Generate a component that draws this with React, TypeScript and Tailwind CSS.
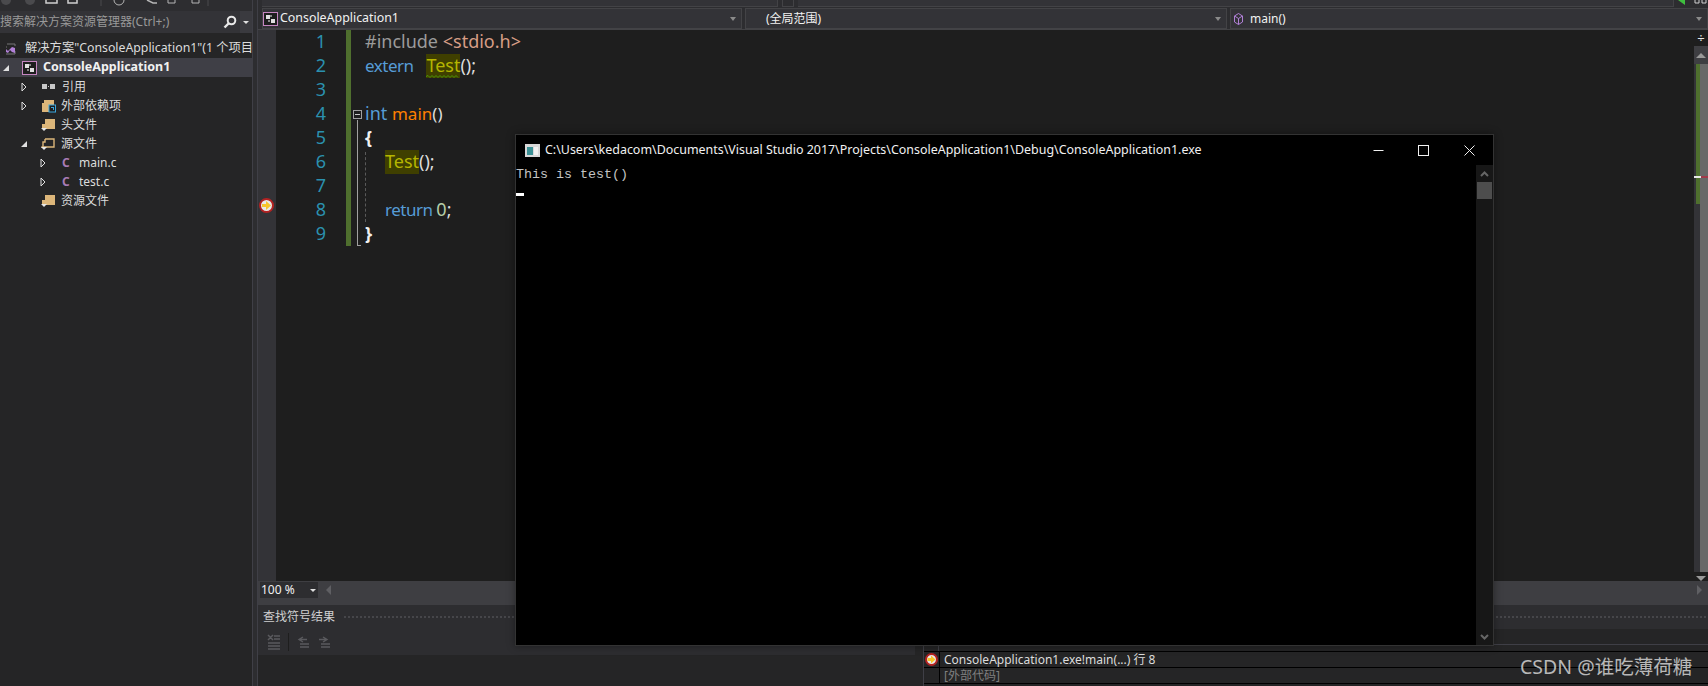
import type { ReactNode } from "react";

const ui = "font-['Noto_Sans','Noto_Sans_CJK_SC',sans-serif]";

function Folder({ open }: { open?: boolean }) {
  return (
    <svg width="15" height="14" viewBox="0 0 15 14" className="shrink-0">
      {open ? (
        <path d="M4 2h9v8H1V11M4 2v3H2v5h11" fill="none" stroke="#dcb67a" strokeWidth="1.4" />
      ) : (
        <path d="M4 1h10v10H1V6h3z" fill="#dcb67a" />
      )}
      <path d="M0 10h6L3 13z" fill="#e8e8e8" />
    </svg>
  );
}

function ProjectIcon() {
  return (
    <svg width="15" height="14" viewBox="0 0 15 14" className="shrink-0">
      <rect x="0.5" y="0.5" width="14" height="13" fill="#1e1e1e" stroke="#c586c0" />
      <path d="M3 3h4v4H3zM8 7h4v4H8z" fill="#e0e0e0" />
      <path d="M7 3h2v2H7zM5 8h2v2H5z" fill="#8a8a8a" />
    </svg>
  );
}

function Expander({ open }: { open?: boolean }) {
  return open ? (
    <svg width="6" height="6" viewBox="0 0 6 6" className="shrink-0">
      <path d="M6 0v6H0z" fill="#e0e0e0" />
    </svg>
  ) : (
    <svg width="6" height="10" viewBox="0 0 6 10" className="shrink-0">
      <path d="M1 1l4 4-4 4z" fill="none" stroke="#e0e0e0" />
    </svg>
  );
}

function CIcon() {
  return <span className="block w-[10px] shrink-0 text-[12px] font-bold leading-none text-[#a87bb5]">C</span>;
}

function Row({ className, children }: { className: string; children: ReactNode }) {
  return <div className={`flex h-[19px] items-center whitespace-nowrap text-[12px] text-[#dcdcdc] ${className}`}>{children}</div>;
}

function SolutionTree() {
  return (
    <div className="flex flex-1 flex-col bg-[#252526] pt-[6px]">
      <Row className="pl-[5px]">
        <svg width="11" height="12" viewBox="0 0 11 12" className="shrink-0">
          <path d="M2 1h8v2M1 4h1M1 11h9V8" fill="none" stroke="#777" />
          <path d="M1 6l2 2 2-2 2-2 3 1v5L7 9 5 7 3 10 1 9z" fill="#b180d7" />
        </svg>
        <span className="ml-[9px] text-[12.3px]">解决方案"ConsoleApplication1"(1 个项目</span>
      </Row>
      <div className="flex h-[19px] items-center bg-[#3f3f46] pl-[3px] text-[12.5px] font-bold text-[#f1f1f1]">
        <Expander open />
        <span className="ml-[13px]"><ProjectIcon /></span>
        <span className="ml-[6px]">ConsoleApplication1</span>
      </div>
      <Row className="pl-[21px]">
        <Expander />
        <span className="ml-[15px] flex w-[15px] items-center gap-[1px]">
          <span className="h-[5px] w-[5px] bg-[#c8c8c8]" />
          <span className="h-[1px] w-[1px] bg-[#c8c8c8]" />
          <span className="h-[5px] w-[5px] bg-[#c8c8c8]" />
        </span>
        <span className="ml-[5px]">引用</span>
      </Row>
      <Row className="pl-[21px]">
        <Expander />
        <span className="ml-[14px]">
          <svg width="15" height="14" viewBox="0 0 15 14" className="shrink-0">
            <path d="M3 1h10v5H8v7H1V4h2z" fill="#dcb67a" />
            <rect x="8" y="6" width="6.5" height="7" fill="#1e1e1e" stroke="#3aa6dd" />
            <path d="M10 8h3v3h-1V9h-2z" fill="#3aa6dd" />
          </svg>
        </span>
        <span className="ml-[5px]">外部依赖项</span>
      </Row>
      <Row className="pl-[41px]">
        <Folder />
        <span className="ml-[5px]">头文件</span>
      </Row>
      <Row className="pl-[21px]">
        <Expander open />
        <span className="ml-[14px]"><Folder open /></span>
        <span className="ml-[5px]">源文件</span>
      </Row>
      <Row className="pl-[40px]">
        <Expander />
        <span className="ml-[16px]"><CIcon /></span>
        <span className="ml-[7px]">main.c</span>
      </Row>
      <Row className="pl-[40px]">
        <Expander />
        <span className="ml-[16px]"><CIcon /></span>
        <span className="ml-[7px]">test.c</span>
      </Row>
      <Row className="pl-[41px]">
        <Folder />
        <span className="ml-[5px]">资源文件</span>
      </Row>
    </div>
  );
}

function LeftPanel() {
  return (
    <aside className="flex w-[252px] shrink-0 flex-col">
      <div className="h-[11px] overflow-hidden bg-[#2d2d30]">
        <svg width="252" height="11" viewBox="0 0 252 11">
          <circle cx="6" cy="0" r="5" fill="#4a4a4d" />
          <circle cx="30" cy="0" r="5" fill="#4a4a4d" />
          <path d="M46 0v3h11V0M68 0v3h9V0" fill="none" stroke="#cfcfcf" strokeWidth="1.5" />
          <path d="M101 0v6M208 0v6" stroke="#4a4a4d" />
          <path d="M114 0a5 5 0 0 0 10 0" fill="none" stroke="#b5b5b5" />
          <path d="M147 0l6 3h4" fill="none" stroke="#b5b5b5" strokeWidth="1.5" />
          <path d="M168 0v3h7V0M192 0v3h7V0" fill="none" stroke="#b5b5b5" />
        </svg>
      </div>
      <div className="flex h-[22px] items-center bg-[#333337]">
        <span className="flex-1 whitespace-nowrap text-[12px] text-[#999999]">搜索解决方案资源管理器(Ctrl+;)</span>
        <svg width="14" height="14" viewBox="0 0 14 14" className="mr-[3px]">
          <circle cx="8.5" cy="5.5" r="3.8" fill="none" stroke="#e8e8e8" strokeWidth="2" />
          <path d="M5.5 8.5L1.5 12.5" stroke="#e8e8e8" strokeWidth="2.4" />
        </svg>
        <div className="flex h-full w-[12px] items-center justify-center bg-[#3a3a3f]">
          <span className="h-0 w-0 border-x-[3px] border-t-[3px] border-x-transparent border-t-[#e0e0e0]" />
        </div>
      </div>
      <SolutionTree />
    </aside>
  );
}

function Combo({ className, children }: { className: string; children: ReactNode }) {
  return (
    <div className={`flex h-[21px] items-center border border-[#434346] bg-[#333337] text-[12px] text-[#f1f1f1] ${className}`}>
      {children}
    </div>
  );
}

function ComboArrow() {
  return <span className="ml-auto mr-[5px] h-0 w-0 border-x-[3px] border-t-[4px] border-x-transparent border-t-[#8a8a8a]" />;
}

function NavBar() {
  return (
    <div className="flex h-[22px] gap-[3px] border-b border-[#434346] bg-[#2d2d30] pl-[4px]">
      <Combo className="w-[480px]">
        <ProjectIcon />
        <span className="ml-[2px] text-[12.4px]">ConsoleApplication1</span>
        <ComboArrow />
      </Combo>
      <Combo className="w-[482px]">
        <span className="ml-[20px]">(全局范围)</span>
        <ComboArrow />
      </Combo>
      <Combo className="flex-1">
        <svg width="11" height="14" viewBox="0 0 11 14" className="ml-[2px]">
          <path d="M5.5 1.5l4 2.5v6l-4 2.5-4-2.5V4zM1.5 4l4 2.5 4-2.5M5.5 6.5v6" fill="none" stroke="#b180d7" />
        </svg>
        <span className="ml-[6px]">main()</span>
        <ComboArrow />
      </Combo>
    </div>
  );
}

function Hl({ children }: { children: ReactNode }) {
  return <span className="inline-block h-[24px] w-[34px] bg-[#3f3f00] align-top text-[#b5b500]">{children}</span>;
}

const lineNumbers = [1, 2, 3, 4, 5, 6, 7, 8, 9];

function CodeLines() {
  const p = "text-[#dcdcdc]";
  const kw = "text-[17px] tracking-[-0.5px] text-[#569cd6]";
  const rows: ReactNode[] = [
    <>
      <span className="text-[#9b9b9b]">#include </span>
      <span className="text-[#d69d85]">&lt;stdio.h&gt;</span>
    </>,
    <>
      <span className={kw}>extern </span>
      <span className="relative ml-[9px] inline-block h-[24px] align-top">
        <Hl>Test</Hl>
        <svg width="34" height="3" viewBox="0 0 34 3" className="absolute bottom-0 left-0">
          <path d="M0 1.5l2-1 2 2 2-2 2 2 2-2 2 2 2-2 2 2 2-2 2 2 2-2 2 2 2-2 2 2 2-2 2 2" fill="none" stroke="#4e9a06" />
        </svg>
      </span>
      <span className={p}>();</span>
    </>,
    null,
    <>
      <span className="text-[#569cd6]">int </span>
      <span className="text-[17px] text-[#ff8000]">main</span>
      <span className="text-[17px] text-[#dcdcdc]">()</span>
    </>,
    <span className="font-bold text-[#f1f1f1]">{"{"}</span>,
    <span className="ml-[20px]">
      <Hl>Test</Hl>
      <span className={p}>();</span>
    </span>,
    null,
    <span className="ml-[20px]">
      <span className={kw}>return </span>
      <span className="text-[#b5cea8]">0</span>
      <span className={p}>;</span>
    </span>,
    <span className="font-bold text-[#f1f1f1]">{"}"}</span>,
  ];
  return (
    <div className="flex flex-col">
      {rows.map((row, i) => (
        <div key={i} className="h-[24px] whitespace-pre text-[18px] leading-[22px]">
          {row}
        </div>
      ))}
    </div>
  );
}

function Editor() {
  return (
    <div className="flex h-[551px] bg-[#1e1e1e]">
      <div className="relative w-[18px] shrink-0 bg-[#333337]">
        <svg width="15" height="15" viewBox="0 0 15 15" className="absolute left-[1px] top-[168px]">
          <circle cx="7.5" cy="7.5" r="6.5" fill="#e8e8e8" stroke="#b22222" strokeWidth="2" />
          <path d="M3 6h4V3l5 4.5-5 4.5V9H3z" fill="#f7c52b" />
        </svg>
      </div>
      <div className="w-[50px] shrink-0 text-right text-[18px] leading-[22px] text-[#2b91af]">
        {lineNumbers.map((n) => (
          <div key={n} className="h-[24px]">{n}</div>
        ))}
      </div>
      <div className="ml-[20px] h-[216px] w-[5px] shrink-0 bg-[#4f6f2e]" />
      <div className="relative ml-[14px] flex-1">
        <CodeLines />
        <div className="absolute left-[-12px] top-[80px] flex h-[9px] w-[9px] items-center justify-center border border-[#a0a0a0] bg-[#1e1e1e]">
          <span className="h-[1px] w-[5px] bg-[#c8c8c8]" />
        </div>
        <div className="absolute left-[-8px] top-[90px] h-[126px] w-[4px] border-b border-l border-[#a0a0a0]" />
        <div className="absolute left-[0px] top-[122px] h-[70px] border-l border-dashed border-[#5a5a5a]" />
      </div>
      <div className="flex w-[14px] shrink-0 flex-col bg-[#686868]">
        <div className="flex h-[16px] items-center justify-center bg-[#1e1e1e] text-[13px] leading-none text-[#e8e8e8]">÷</div>
        <div className="flex h-[18px] items-center justify-center bg-[#3e3e42]">
          <span className="h-0 w-0 border-x-[5px] border-b-[5px] border-x-transparent border-b-[#999999]" />
        </div>
        <div className="relative flex flex-1">
          <div className="w-[6px] bg-[#333337]">
            <div className="ml-[2px] h-[140px] bg-[#4f6f2e]" />
          </div>
          <div className="absolute left-0 top-[112px] flex h-[2px] w-full">
            <span className="w-[7px] bg-[#e8e8e8]" />
            <span className="flex-1 bg-[#a03a4a]" />
          </div>
        </div>
        <div className="flex h-[9px] items-end justify-center bg-[#1e1e1e]">
          <span className="h-0 w-0 border-x-[5px] border-t-[5px] border-x-transparent border-t-[#999999]" />
        </div>
      </div>
    </div>
  );
}

function HScroll() {
  return (
    <div className="flex h-[24px] items-start bg-[#3e3e42] pl-[2px] pt-[1px]">
      <div className="flex h-[16px] w-[58px] items-center bg-[#2d2d30] text-[12px] text-[#f1f1f1]">
        <span className="ml-[1px]">100 %</span>
        <span className="ml-auto mr-[2px] h-0 w-0 border-x-[3px] border-t-[3px] border-x-transparent border-t-[#e0e0e0]" />
      </div>
      <span className="ml-[8px] mt-[3px] h-0 w-0 border-y-[5px] border-r-[5px] border-y-transparent border-r-[#5f5f63]" />
      <span className="ml-auto mr-[6px] mt-[3px] h-0 w-0 border-y-[5px] border-l-[5px] border-y-transparent border-l-[#5f5f63]" />
    </div>
  );
}

function FindSymbolPanel() {
  return (
    <div className="w-[657px] shrink-0">
      <div className="flex h-[26px] items-center bg-[#2d2d30] pl-[9px]">
        <svg width="14" height="16" viewBox="0 0 14 16">
          <path d="M1 1l5 5M6 1L1 6M7 2h6M7 5h6M1 9h12M1 12h12M1 15h12" stroke="#5a5a5e" strokeWidth="1.5" />
        </svg>
        <span className="ml-[7px] h-[18px] w-[1px] bg-[#1e1e1e]" />
        <svg width="14" height="12" viewBox="0 0 14 12" className="ml-[7px]">
          <path d="M7 1L3 3.5 7 6M3 3.5h8M4 8h9M4 11h9" fill="none" stroke="#5a5a5e" strokeWidth="1.4" />
        </svg>
        <svg width="14" height="12" viewBox="0 0 14 12" className="ml-[8px]">
          <path d="M5 1l4 2.5L5 6M1 3.5h8M3 8h9M3 11h9" fill="none" stroke="#5a5a5e" strokeWidth="1.4" />
        </svg>
      </div>
    </div>
  );
}

function CallStack() {
  return (
    <div className="ml-[8px] flex flex-1 flex-col border-l border-[#3f3f46]">
      <div className="h-[16px] border-b border-[#3f3f46]" />
      <div className="flex h-[7px] border-b border-black">
        <div className="w-[15px] border-r border-[#3f3f46]" />
      </div>
      <div className="flex h-[16px] items-center border-b border-black text-[12px] text-[#dcdcdc]">
        <div className="flex h-full w-[16px] items-center justify-center border-r border-black">
          <svg width="13" height="13" viewBox="0 0 13 13">
            <circle cx="6.5" cy="6.5" r="5.5" fill="#e8e8e8" stroke="#b22222" strokeWidth="2" />
            <path d="M2.5 5h3.5V2.5L10.5 6.5 6 10.500V8H2.500z" fill="#f7c52b" />
          </svg>
        </div>
        <span className="ml-[4px]">ConsoleApplication1.exe!main(...) 行 8</span>
      </div>
      <div className="flex h-[16px] items-center border-b border-black text-[12px] text-[#808080]">
        <div className="h-full w-[16px] border-r border-black" />
        <span className="ml-[4px]">[外部代码]</span>
      </div>
    </div>
  );
}

function BottomDock() {
  return (
    <div className="flex flex-1 flex-col bg-[#252526]">
      <div className="flex h-[24px] items-center bg-[#2d2d30] pl-[5px]">
        <span className="text-[12px] text-[#d0d0d0]">查找符号结果</span>
        <span className="ml-[8px] h-[5px] flex-1 bg-[radial-gradient(#46464a_1px,transparent_1px)] bg-[length:4px_4px]" />
      </div>
      <div className="flex flex-1">
        <FindSymbolPanel />
        <CallStack />
      </div>
    </div>
  );
}

function ConsoleWindow() {
  return (
    <div className="absolute left-[515px] top-[134px] flex h-[512px] w-[979px] flex-col border border-[#333333] bg-black shadow-[0_0_8px_rgba(0,0,0,0.4)]">
      <div className="flex h-[30px] shrink-0 items-center">
        <svg width="15" height="13" viewBox="0 0 15 13" className="ml-[9px]">
          <rect width="15" height="13" fill="#d8d8d8" />
          <rect x="2" y="3" width="6" height="8" fill="#3a8f94" />
          <rect x="9" y="3" width="4" height="8" fill="#f0f0f0" />
        </svg>
        <span className="ml-[5px] whitespace-nowrap text-[12.44px] text-[#f1f1f1]">C:\Users\kedacom\Documents\Visual Studio 2017\Projects\ConsoleApplication1\Debug\ConsoleApplication1.exe</span>
        <svg width="11" height="11" viewBox="0 0 11 11" className="ml-auto">
          <path d="M0.500 5.500h10" stroke="#f1f1f1" />
        </svg>
        <svg width="11" height="11" viewBox="0 0 11 11" className="ml-[34px]">
          <rect x="0.500" y="0.500" width="10" height="10" fill="none" stroke="#f1f1f1" />
        </svg>
        <svg width="11" height="11" viewBox="0 0 11 11" className="ml-[35px] mr-[18px]">
          <path d="M0.500 0.500l10 10M10.500 0.500l-10 10" stroke="#f1f1f1" />
        </svg>
      </div>
      <div className="flex flex-1">
        <div className="flex-1 font-['Liberation_Mono',monospace] text-[13.33px] leading-[16px] text-[#c4c4c4]">
          <div className="h-[16px] pt-[2px]">This is test()</div>
          <div className="mt-[11px] flex h-[16px] items-start pt-[1px]">
            <span className="h-[3px] w-[8px] bg-white" />
          </div>
        </div>
        <div className="flex w-[17px] flex-col items-center bg-[#171717]">
          <svg width="9" height="6" viewBox="0 0 9 6" className="mt-[6px]">
            <path d="M1 5l3.500-3.500L8 5" fill="none" stroke="#666" strokeWidth="2" />
          </svg>
          <div className="mt-[5px] h-[17px] w-[15px] bg-[#4d4d4d]" />
          <svg width="9" height="6" viewBox="0 0 9 6" className="mb-[5px] mt-auto">
            <path d="M1 1l3.500 3.500L8 1" fill="none" stroke="#666" strokeWidth="2" />
          </svg>
        </div>
      </div>
    </div>
  );
}

export default function App() {
  return (
    <div className={`relative flex h-[686px] w-[1708px] overflow-hidden bg-[#2d2d30] ${ui}`}>
      <LeftPanel />
      <div className="w-[6px] shrink-0 border-x border-[#3f3f46] bg-[#2d2d30]" />
      <main className="flex flex-1 flex-col">
        <div className="flex h-[8px] items-start gap-[4px] bg-[#2d2d30] pl-[4px]">
          <div className="h-[7px] w-[516px] border-b border-r border-[#434346] bg-[#333337]" />
          <div className="h-[7px] w-[12px] border-b border-x border-[#434346] bg-[#2d2d30]" />
          <div className="h-[7px] flex-1 border-b border-r border-[#434346] bg-[#333337]" />
          <svg width="30" height="7" viewBox="0 0 30 7">
            <path d="M0 0h7v5z" fill="#3fbf3f" />
            <path d="M17 0v3h4V0M24 0v3h4V0" fill="none" stroke="#d0d0d0" />
          </svg>
        </div>
        <NavBar />
        <Editor />
        <HScroll />
        <BottomDock />
      </main>
      <ConsoleWindow />
      <div className="absolute left-[1520px] top-[653px] text-[19.5px] leading-[28px] text-[#b8b8b8]">CSDN @谁吃薄荷糖</div>
    </div>
  );
}
